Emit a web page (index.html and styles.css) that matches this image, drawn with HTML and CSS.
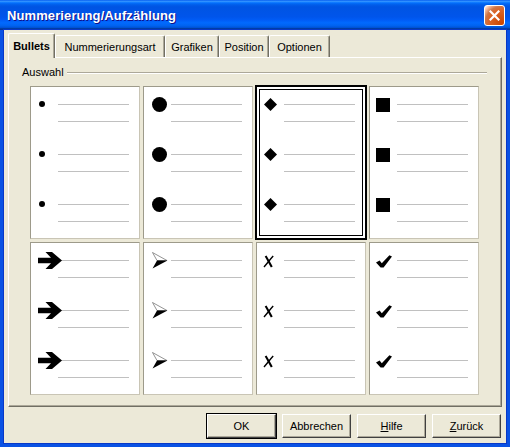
FILE: index.html
```html
<!DOCTYPE html>
<html lang="de">
<head>
<meta charset="utf-8">
<title>Nummerierung/Aufzählung</title>
<link rel="stylesheet" href="styles.css">
</head>
<body>
<div class="window">
  <div class="titlebar">
    <span class="title">Nummerierung/Aufzählung</span>
    <button class="close" aria-label="Schließen">
      <svg width="11" height="11" viewBox="0 0 11 11"><path d="M1.5 1.5 L9.5 9.5 M9.5 1.5 L1.5 9.5" stroke="#fff" stroke-width="2.2" fill="none" stroke-linecap="square"/></svg>
    </button>
  </div>
  <div class="client">
    <div class="tabs">
      <div class="tab active t-bullets">Bullets</div>
      <div class="tab t-num">Nummerierungsart</div>
      <div class="tab t-graf">Grafiken</div>
      <div class="tab t-pos">Position</div>
      <div class="tab t-opt">Optionen</div>
    </div>
    <div class="panel">
      <div class="legend"><span>Auswahl</span><span class="rule"></span></div>
      <div class="grid">
        <div class="cell">
          <div class="item"><span class="l1"></span><span class="l2"></span><svg class="mk dot" width="6" height="6" viewBox="0 0 6 6"><circle cx="3" cy="3" r="3"/></svg></div>
          <div class="item"><span class="l1"></span><span class="l2"></span><svg class="mk dot" width="6" height="6" viewBox="0 0 6 6"><circle cx="3" cy="3" r="3"/></svg></div>
          <div class="item"><span class="l1"></span><span class="l2"></span><svg class="mk dot" width="6" height="6" viewBox="0 0 6 6"><circle cx="3" cy="3" r="3"/></svg></div>
        </div>
        <div class="cell">
          <div class="item"><span class="l1"></span><span class="l2"></span><svg class="mk big" width="15" height="15" viewBox="0 0 15 15"><circle cx="7.5" cy="7.5" r="7.5"/></svg></div>
          <div class="item"><span class="l1"></span><span class="l2"></span><svg class="mk big" width="15" height="15" viewBox="0 0 15 15"><circle cx="7.5" cy="7.5" r="7.5"/></svg></div>
          <div class="item"><span class="l1"></span><span class="l2"></span><svg class="mk big" width="15" height="15" viewBox="0 0 15 15"><circle cx="7.5" cy="7.5" r="7.5"/></svg></div>
        </div>
        <div class="cell selected">
          <div class="item"><span class="l1"></span><span class="l2"></span><svg class="mk dia" width="13" height="13" viewBox="0 0 13 13"><polygon points="6.5,0 13,6.5 6.5,13 0,6.5"/></svg></div>
          <div class="item"><span class="l1"></span><span class="l2"></span><svg class="mk dia" width="13" height="13" viewBox="0 0 13 13"><polygon points="6.5,0 13,6.5 6.5,13 0,6.5"/></svg></div>
          <div class="item"><span class="l1"></span><span class="l2"></span><svg class="mk dia" width="13" height="13" viewBox="0 0 13 13"><polygon points="6.5,0 13,6.5 6.5,13 0,6.5"/></svg></div>
        </div>
        <div class="cell">
          <div class="item"><span class="l1"></span><span class="l2"></span><svg class="mk sq" width="14" height="14" viewBox="0 0 14 14"><rect width="14" height="14"/></svg></div>
          <div class="item"><span class="l1"></span><span class="l2"></span><svg class="mk sq" width="14" height="14" viewBox="0 0 14 14"><rect width="14" height="14"/></svg></div>
          <div class="item"><span class="l1"></span><span class="l2"></span><svg class="mk sq" width="14" height="14" viewBox="0 0 14 14"><rect width="14" height="14"/></svg></div>
        </div>
        <div class="cell">
          <div class="item"><span class="l1"></span><span class="l2"></span><svg class="mk arrow" width="24" height="17" viewBox="0 0 24 17"><path d="M0 5.8 H13 L7.5 0 H14 L24 8.5 L14 17 H7.5 L13 11.2 H0 Z"/></svg></div>
          <div class="item"><span class="l1"></span><span class="l2"></span><svg class="mk arrow" width="24" height="17" viewBox="0 0 24 17"><path d="M0 5.8 H13 L7.5 0 H14 L24 8.5 L14 17 H7.5 L13 11.2 H0 Z"/></svg></div>
          <div class="item"><span class="l1"></span><span class="l2"></span><svg class="mk arrow" width="24" height="17" viewBox="0 0 24 17"><path d="M0 5.8 H13 L7.5 0 H14 L24 8.5 L14 17 H7.5 L13 11.2 H0 Z"/></svg></div>
        </div>
        <div class="cell">
          <div class="item"><span class="l1"></span><span class="l2"></span><svg class="mk head" width="16" height="17" viewBox="0 0 16 17"><polygon points="0.5,0.5 15,8.5 5,8.5" fill="#fff" stroke="#777" stroke-width="0.8"/><polygon points="5,8.5 15.5,8.5 0.5,16.5" fill="#000"/></svg></div>
          <div class="item"><span class="l1"></span><span class="l2"></span><svg class="mk head" width="16" height="17" viewBox="0 0 16 17"><polygon points="0.5,0.5 15,8.5 5,8.5" fill="#fff" stroke="#777" stroke-width="0.8"/><polygon points="5,8.5 15.5,8.5 0.5,16.5" fill="#000"/></svg></div>
          <div class="item"><span class="l1"></span><span class="l2"></span><svg class="mk head" width="16" height="17" viewBox="0 0 16 17"><polygon points="0.5,0.5 15,8.5 5,8.5" fill="#fff" stroke="#777" stroke-width="0.8"/><polygon points="5,8.5 15.5,8.5 0.5,16.5" fill="#000"/></svg></div>
        </div>
        <div class="cell">
          <div class="item"><span class="l1"></span><span class="l2"></span><svg class="mk cross" width="11" height="13" viewBox="0 0 11 13"><path d="M2.6 1 C4.5 4, 6.5 8, 8.8 12" stroke="#000" stroke-width="2.1" fill="none"/><path d="M10.2 1 C7 4.5, 4.5 8, 1 12" stroke="#000" stroke-width="1.4" fill="none"/></svg></div>
          <div class="item"><span class="l1"></span><span class="l2"></span><svg class="mk cross" width="11" height="13" viewBox="0 0 11 13"><path d="M2.6 1 C4.5 4, 6.5 8, 8.8 12" stroke="#000" stroke-width="2.1" fill="none"/><path d="M10.2 1 C7 4.5, 4.5 8, 1 12" stroke="#000" stroke-width="1.4" fill="none"/></svg></div>
          <div class="item"><span class="l1"></span><span class="l2"></span><svg class="mk cross" width="11" height="13" viewBox="0 0 11 13"><path d="M2.6 1 C4.5 4, 6.5 8, 8.8 12" stroke="#000" stroke-width="2.1" fill="none"/><path d="M10.2 1 C7 4.5, 4.5 8, 1 12" stroke="#000" stroke-width="1.4" fill="none"/></svg></div>
        </div>
        <div class="cell">
          <div class="item"><span class="l1"></span><span class="l2"></span><svg class="mk check" width="16" height="13" viewBox="0 0 16 13"><path d="M0 7.5 L3.6 5.4 L5.8 8.2 L13.4 0.2 L16 1.4 L7.6 12.6 L4.6 12.6 Z"/></svg></div>
          <div class="item"><span class="l1"></span><span class="l2"></span><svg class="mk check" width="16" height="13" viewBox="0 0 16 13"><path d="M0 7.5 L3.6 5.4 L5.8 8.2 L13.4 0.2 L16 1.4 L7.6 12.6 L4.6 12.6 Z"/></svg></div>
          <div class="item"><span class="l1"></span><span class="l2"></span><svg class="mk check" width="16" height="13" viewBox="0 0 16 13"><path d="M0 7.5 L3.6 5.4 L5.8 8.2 L13.4 0.2 L16 1.4 L7.6 12.6 L4.6 12.6 Z"/></svg></div>
        </div>
      </div>
    </div>
    <div class="buttons">
      <button class="btn default">OK</button>
      <button class="btn">Abbrechen</button>
      <button class="btn"><u>H</u>ilfe</button>
      <button class="btn"><u>Z</u>urück</button>
    </div>
  </div>
</div>
</body>
</html>
```

FILE: styles.css
```css
html, body {
  margin: 0;
  padding: 0;
  background: #fff;
}

body {
  font-family: "Liberation Sans", Arial, sans-serif;
  font-size: 11px;
  color: #000;
}

.window {
  width: 510px;
  height: 447px;
  display: flex;
  flex-direction: column;
  background: #0a52e4;
  box-sizing: border-box;
}

.titlebar {
  height: 30px;
  flex: none;
  display: flex;
  align-items: center;
  justify-content: space-between;
  padding: 0 5px 0 7px;
  background: linear-gradient(to bottom, #0058ee 0%, #3593ff 4%, #288eff 6%, #127dff 8%, #036ffc 10%, #0262ee 14%, #0057e5 20%, #0054e3 24%, #0055eb 56%, #005bf5 66%, #026afe 76%, #0062ef 86%, #0052d6 92%, #0040ab 94%, #003092 100%);
}

.title {
  color: #fff;
  font-family: "Liberation Sans", Arial, sans-serif;
  font-weight: bold;
  font-size: 13px;
  letter-spacing: 0.1px;
  text-shadow: 1px 1px #0f1089;
}

.close {
  width: 21px;
  height: 21px;
  box-sizing: border-box;
  padding: 0;
  border: 1px solid #fff;
  border-radius: 3px;
  background: radial-gradient(circle at 90% 90%, #cc4600 0%, #dc6527 55%, #cd7546 70%, #ffccb2 90%, #fff 100%);
  display: flex;
  align-items: center;
  justify-content: center;
}

.client {
  flex: 1;
  margin: 0 4px 4px;
  background: #ece9d8;
  padding: 3px 4px 0;
  display: flex;
  flex-direction: column;
  box-shadow: 0 0 0 1px #0838c8;
}

.tabs {
  display: flex;
  align-items: flex-end;
  height: 24px;
  flex: none;
}

.tab {
  height: 22px;
  box-sizing: border-box;
  border-top: 1px solid #fff;
  border-left: 1px solid #fff;
  border-right: 1px solid #716f64;
  box-shadow: inset -1px 0 #aca899;
  border-radius: 2px 2px 0 0;
  display: flex;
  align-items: center;
  justify-content: center;
  padding-top: 1px;
  background: #ece9d8;
}

.tab.active {
  height: 25px;
  margin-bottom: -1px;
  font-weight: bold;
  position: relative;
  z-index: 1;
  padding-bottom: 2px;
}

.t-bullets { width: 47px; }
.t-num { width: 110px; }
.t-graf { width: 54px; }
.t-pos { width: 50px; }
.t-opt { width: 61px; }

.panel {
  height: 350px;
  box-sizing: border-box;
  border-top: 1px solid #fff;
  border-left: 1px solid #fff;
  border-right: 1px solid #716f64;
  border-bottom: 1px solid #716f64;
  box-shadow: inset -1px -1px #aca899;
  padding: 7px 14px 0 13px;
  flex: none;
}

.legend {
  display: flex;
  align-items: center;
  height: 14px;
  line-height: 14px;
}

.rule {
  flex: 1;
  margin-left: 3px;
  margin-top: 2px;
  border-top: 1px solid #aca899;
  border-bottom: 1px solid #fff;
}

.grid {
  display: grid;
  grid-template-columns: repeat(4, 110px);
  grid-template-rows: repeat(2, 153px);
  column-gap: 3px;
  row-gap: 3px;
  margin: 7px 0 0 8px;
}

.cell {
  background: #fff;
  box-sizing: border-box;
  border-top: 1px solid #9d9a8a;
  border-left: 1px solid #9d9a8a;
  border-right: 1px solid #c9c5b5;
  border-bottom: 1px solid #c9c5b5;
  padding-top: 9px;
}

.cell.selected {
  border: 1px solid #000;
  box-shadow: 0 0 0 1px #000, inset 0 0 0 2px #fff, inset 0 0 0 3px #000;
}

.item {
  height: 50px;
  display: grid;
  grid-template-columns: 27px 71px;
  grid-template-rows: 16px 9px 1px;
  align-items: center;
}

.l1, .l2 {
  grid-column: 2;
  height: 1px;
  background: #c0c0c0;
}

.l1 { grid-row: 1; }
.l2 { grid-row: 3; }

.mk {
  grid-column: 1;
  grid-row: 1;
  justify-self: start;
  display: block;
  fill: #000;
}

.dot { margin-left: 8px; }
.big { margin-left: 8px; }
.dia { margin-left: 7px; }
.sq { margin-left: 6px; margin-top: 2px; }
.arrow { margin-left: 7px; }
.head { margin-left: 8px; }
.cross { margin-left: 6px; margin-top: 3px; }
.check { margin-left: 6px; margin-top: 3px; }

.buttons {
  display: flex;
  justify-content: flex-end;
  gap: 6px;
  margin: 7px 1px 0 0;
}

.btn {
  width: 69px;
  height: 24px;
  box-sizing: border-box;
  padding: 0;
  font-family: "Liberation Sans", Arial, sans-serif;
  font-size: 11px;
  color: #000;
  background: #ece9d8;
  border-top: 1px solid #fff;
  border-left: 1px solid #fff;
  border-right: 1px solid #404040;
  border-bottom: 1px solid #404040;
  box-shadow: inset -1px -1px #aca899;
}

.btn.default {
  outline: 1px solid #000;
  outline-offset: 0;
}
```
